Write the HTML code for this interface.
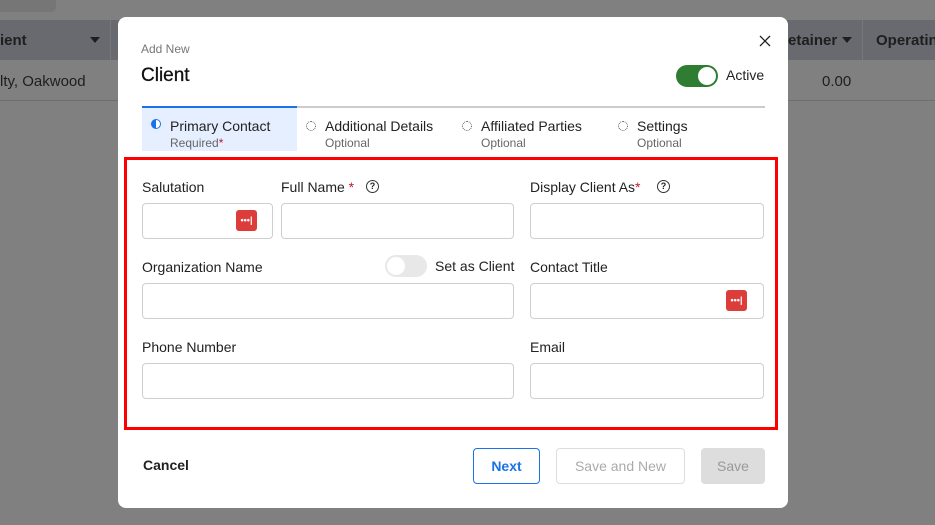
<!DOCTYPE html><html><head><style>
*{box-sizing:border-box;margin:0;padding:0}
body{width:935px;height:525px;background:#808080;font-family:"Liberation Sans",sans-serif;position:relative;overflow:hidden;color:#222}
.a{position:absolute}
.lbl{font-size:14px;color:#222}
.inp{position:absolute;border:1px solid #cfcfcf;border-radius:4px;background:#fff;height:36px}
.dots{position:absolute;width:21px;height:21px;background:#dc3d3a;border-radius:3px;color:#fff;font-size:9px;line-height:20px;text-align:center;font-weight:bold;letter-spacing:0}
.star{color:#c0192e}
.tab{position:absolute;height:43px;font-size:14px}
.tab small{display:block;font-size:12px;color:#666;margin-top:2px}
.ring{position:absolute;left:-19px;top:3px;width:10px;height:10px;border:1px dotted #555;border-radius:50%}
</style></head><body>
<div class="a" style="left:0;top:0;width:56px;height:12px;background:#767676;border-radius:0 0 5px 0"></div>
<div class="a" style="left:0;top:20px;width:935px;height:40px;background:#686a6f"></div>
<div class="a" style="left:110px;top:20px;width:1px;height:40px;background:#777"></div>
<div class="a" style="left:862px;top:20px;width:1px;height:40px;background:#777"></div>
<div class="a" style="left:0;top:32px;font-size:15px;font-weight:bold;color:#1e1e1e">ient</div>
<div class="a" style="left:90px;top:37px;border:5px solid transparent;border-top:6px solid #1e1e1e"></div>
<div class="a" style="left:0;top:73px;font-size:15px;color:#1e1e1e">lty, Oakwood</div>
<div class="a" style="left:0;top:100px;width:935px;height:1px;background:#6e6e6e"></div>
<div class="a" style="left:788px;top:32px;font-size:15px;font-weight:bold;color:#1e1e1e">etainer</div>
<div class="a" style="left:842px;top:37px;border:5px solid transparent;border-top:6px solid #1e1e1e"></div>
<div class="a" style="left:876px;top:32px;font-size:15px;font-weight:bold;color:#1e1e1e">Operatin</div>
<div class="a" style="left:822px;top:73px;font-size:15px;color:#1e1e1e">0.00</div>

<div class="a" style="left:118px;top:17px;width:670px;height:491px;background:#fff;border-radius:8px"></div>
<div class="a" style="left:141px;top:42px;font-size:12px;color:#777">Add New</div>
<div class="a" style="left:141px;top:65px;font-size:19px;color:#111;-webkit-text-stroke:0.3px #111">Client</div>
<svg class="a" style="left:758px;top:34px" width="14" height="14"><path d="M2 2L12 12M12 2L2 12" stroke="#222" stroke-width="1.3"/></svg>
<div class="a" style="left:676px;top:65px;width:42px;height:22px;border-radius:11px;background:#2e7d32"></div>
<div class="a" style="left:698px;top:67px;width:18px;height:18px;border-radius:50%;background:#fff"></div>
<div class="a" style="left:726px;top:67px;font-size:14px">Active</div>

<div class="a" style="left:142px;top:106px;width:623px;height:2px;background:#ccc"></div>
<div class="a" style="left:142px;top:106px;width:155px;height:45px;background:#e6efff;border-top:2px solid #1a73e8"></div>
<div class="tab" style="left:170px;top:118px">Primary Contact<small>Required<span class="star">*</span></small></div>
<div class="a" style="left:151px;top:119px;width:10px;height:10px;border-radius:50%;border:1.5px solid #1a73e8;background:linear-gradient(90deg,#1a73e8 50%,#fff 50%)"></div>
<div class="tab" style="left:325px;top:118px"><span class="ring"></span>Additional Details<small>Optional</small></div>
<div class="tab" style="left:481px;top:118px"><span class="ring"></span>Affiliated Parties<small>Optional</small></div>
<div class="tab" style="left:637px;top:118px"><span class="ring"></span>Settings<small>Optional</small></div>

<div class="a" style="left:124px;top:157px;width:654px;height:273px;border:3px solid #f00"></div>

<div class="a lbl" style="left:142px;top:179px">Salutation</div>
<div class="a lbl" style="left:281px;top:179px">Full Name<span class="star"> *</span></div>
<div class="a" style="left:366px;top:180px;width:13px;height:13px;border:1.3px solid #333;border-radius:50%;font-size:9px;text-align:center;line-height:11px;font-weight:bold">?</div>
<div class="a lbl" style="left:530px;top:179px">Display Client As<span class="star">*</span></div>
<div class="a" style="left:657px;top:180px;width:13px;height:13px;border:1.3px solid #333;border-radius:50%;font-size:9px;text-align:center;line-height:11px;font-weight:bold">?</div>
<div class="inp" style="left:142px;top:203px;width:131px"></div>
<div class="dots" style="left:236px;top:210px">•••|</div>
<div class="inp" style="left:281px;top:203px;width:233px"></div>
<div class="inp" style="left:530px;top:203px;width:234px"></div>

<div class="a lbl" style="left:142px;top:259px">Organization Name</div>
<div class="a" style="left:385px;top:255px;width:42px;height:22px;border-radius:11px;background:#e8e8e8"></div>
<div class="a" style="left:387px;top:257px;width:18px;height:18px;border-radius:50%;background:#fff"></div>
<div class="a lbl" style="left:435px;top:258px">Set as Client</div>
<div class="a lbl" style="left:530px;top:259px">Contact Title</div>
<div class="inp" style="left:142px;top:283px;width:372px"></div>
<div class="inp" style="left:530px;top:283px;width:234px"></div>
<div class="dots" style="left:726px;top:290px">•••|</div>

<div class="a lbl" style="left:142px;top:339px">Phone Number</div>
<div class="a lbl" style="left:530px;top:339px">Email</div>
<div class="inp" style="left:142px;top:363px;width:372px"></div>
<div class="inp" style="left:530px;top:363px;width:234px"></div>

<div class="a" style="left:143px;top:457px;font-size:14px;font-weight:bold">Cancel</div>
<div class="a" style="left:473px;top:448px;width:67px;height:36px;border:1px solid #1a73e8;border-radius:4px;color:#1a73e8;font-size:14px;font-weight:bold;text-align:center;line-height:34px">Next</div>
<div class="a" style="left:556px;top:448px;width:129px;height:36px;border:1px solid #ddd;border-radius:4px;color:#aaa;font-size:14px;text-align:center;line-height:34px">Save and New</div>
<div class="a" style="left:701px;top:448px;width:64px;height:36px;background:#ddd;border-radius:4px;color:#999;font-size:14px;text-align:center;line-height:36px">Save</div>
</body></html>
